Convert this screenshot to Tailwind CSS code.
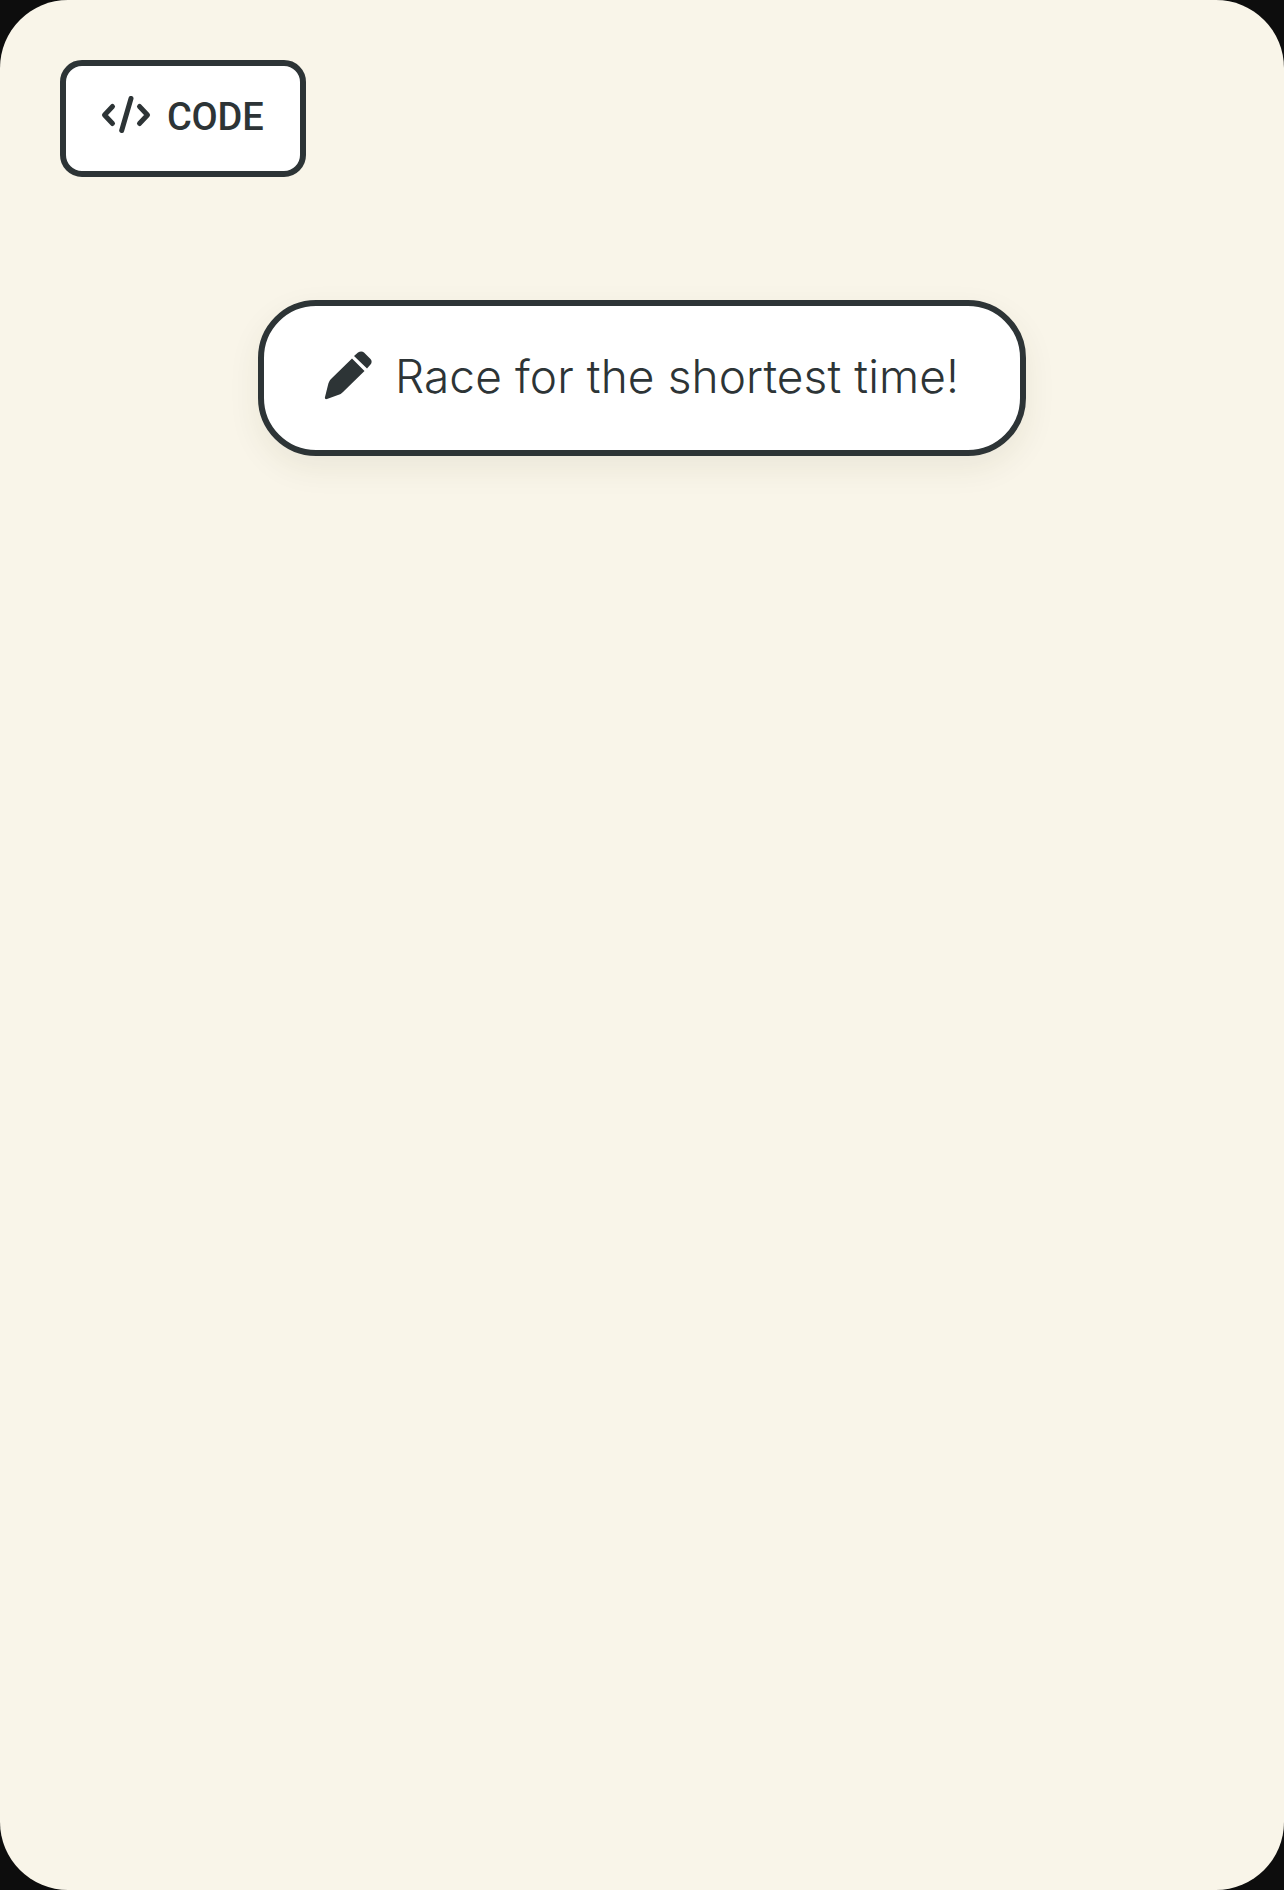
<!DOCTYPE html>
<html lang="en">
<head>
  <meta charset="UTF-8" />
  <title>Race for the shortest time</title>
  <script src="https://cdn.jsdelivr.net/npm/@tailwindcss/browser@4"></script>
</head>
<body class="bg-[#0d0d0d] overflow-hidden">
  <div class="w-[1284px] h-[1890px] rounded-[68px] bg-[#f9f5e9] p-[60px] text-[#2d3436]">

    <!-- Code button -->
    <button class="flex items-center w-[246px] h-[117px] pl-[34px] pb-[5px] gap-[15px] bg-white border-[6px] border-[#2d3436] rounded-[22px]">
      <svg class="w-[52px] h-[40px]" viewBox="0 0 52 40" fill="none" stroke="#2d3436" stroke-width="5" stroke-linecap="round" stroke-linejoin="round">
        <path d="M12.500 10.500 4.500 19l8 8.500" />
        <path d="M39.500 10.500l8 8.500-8 8.500" />
        <path d="M31 2.500 21.700 34.500" />
      </svg>
      <span class="pt-[2px] text-[38px] font-medium tracking-[-0.2px] font-['Roboto',sans-serif]">CODE</span>
    </button>

    <!-- Prompt pill -->
    <div class="flex justify-center mt-[123px]">
      <div class="flex items-center w-[768px] h-[156px] pl-[60px] pb-[4px] gap-[21px] bg-white border-[6px] border-[#2d3436] rounded-[58px] shadow-[0_12px_32px_rgba(70,60,20,0.08)]">
        <svg class="w-[50px] h-[50px] shrink-0" viewBox="0 0 50 50" fill="#2d3436">
          <path d="M28 7.500 40.500 20 19 41C17.500 42.500 16 43.500 14 44L3 48C1.500 48.500.5 47.500 1 46L4 34C4.500 31.500 5.500 29.500 7 28Z" />
          <path d="M30 5 34 1.500C36 0 38.500 0 40 1.500L46.500 8C48 9.500 48 12 46.500 13.500L43 17.500Z" />
        </svg>
        <span class="text-[46px] font-[350] tracking-[0.1px] font-['Inter',sans-serif] whitespace-nowrap">Race for the shortest time!</span>
      </div>
    </div>
  </div>
</body>
</html>
